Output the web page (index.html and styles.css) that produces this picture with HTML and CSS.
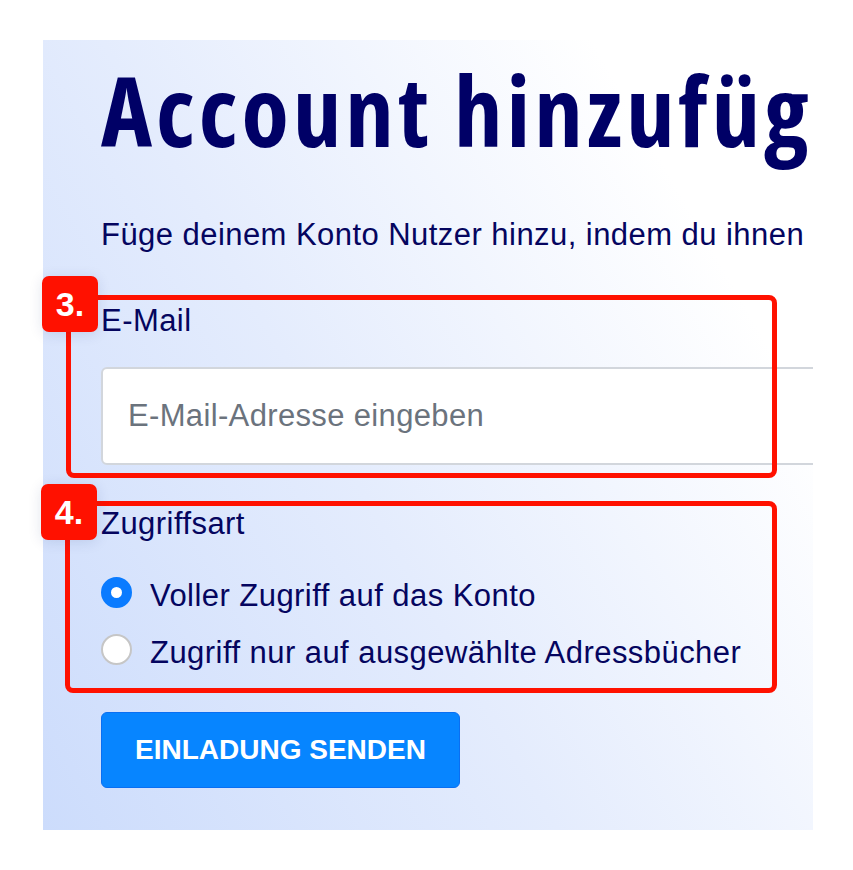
FILE: index.html
```html
<!DOCTYPE html>
<html lang="de">
<head>
<meta charset="utf-8">
<title>Account hinzufügen</title>
<link rel="stylesheet" href="styles.css">
</head>
<body>
<div class="page">
  <main class="panel">
    <h1 class="title">Account hinzufüg</h1>
    <p class="lead">Füge deinem Konto Nutzer hinzu, indem du ihnen</p>
    <div class="field field-email">
      <label class="label" for="email">E-Mail</label>
      <input class="input" id="email" type="email" placeholder="E-Mail-Adresse eingeben">
    </div>
    <div class="field field-access">
      <div class="label label-access">Zugriffsart</div>
      <label class="radio radio-first"><span class="dot dot-on"></span><span>Voller Zugriff auf das Konto</span></label>
      <label class="radio"><span class="dot"></span><span>Zugriff nur auf ausgewählte Adressbücher</span></label>
    </div>
    <button class="btn" type="button">EINLADUNG SENDEN</button>
  </main>
  <div class="mark mark-3"></div>
  <div class="badge badge-3">3.</div>
  <div class="mark mark-4"></div>
  <div class="badge badge-4">4.</div>
</div>
</body>
</html>
```
FILE: styles.css
```css
html, body {
  margin: 0;
  padding: 0;
  background: #ffffff;
}

.page {
  position: relative;
  width: 853px;
  height: 870px;
  padding: 40px 0 0 43px;
  box-sizing: border-box;
}

.panel {
  width: 770px;
  height: 790px;
  box-sizing: border-box;
  padding: 21px 0 0 58px;
  overflow: hidden;
  display: flex;
  flex-direction: column;
  align-items: flex-start;
  background: linear-gradient(60deg, #ccdcfc 0%, #e4ecfd 42%, #ffffff 82%);
  font-family: "Liberation Sans", Arial, sans-serif;
  color: #05055f;
}

.title {
  margin: 0 0 1px 0;
  font-family: "Open Sans", "Lato", sans-serif;
  font-weight: 700;
  font-stretch: 80%;
  font-size: 97px;
  line-height: 96px;
  height: 96px;
  color: #000066;
  white-space: nowrap;
  letter-spacing: 4px;
}

.lead {
  margin: 59px 0 0 0;
  font-size: 31px;
  line-height: 36px;
  letter-spacing: 0.45px;
  white-space: nowrap;
}

.field {
  display: flex;
  flex-direction: column;
  align-items: flex-start;
  width: 100%;
}

.field-email {
  margin-top: 50px;
}

.label {
  font-size: 31px;
  line-height: 36px;
  letter-spacing: 0.45px;
}

.input {
  margin-top: 28px;
  width: 760px;
  height: 98px;
  box-sizing: border-box;
  border: 2px solid #d2d6dc;
  border-radius: 6px;
  background: #ffffff;
  padding: 0 0 0 25px;
  font-family: "Liberation Sans", Arial, sans-serif;
  font-size: 31px;
  letter-spacing: 0.35px;
  color: #333;
  outline: none;
}

.input::placeholder {
  color: #6b737d;
}

.field-access {
  margin-top: 41px;
}

.radio {
  display: flex;
  align-items: center;
  gap: 18px;
  font-size: 31px;
  line-height: 31px;
  height: 31px;
  margin-top: 26px;
  letter-spacing: 0.45px;
  white-space: nowrap;
}

.radio-first {
  margin-top: 38px;
}

.dot {
  width: 31px;
  height: 31px;
  box-sizing: border-box;
  border-radius: 50%;
  background: #ffffff;
  border: 2px solid #c6c6c6;
  margin-bottom: 6px;
  flex: none;
}

.dot-on {
  border: 10px solid #0a7bff;
}

.btn {
  margin-top: 44px;
  width: 359px;
  height: 76px;
  box-sizing: border-box;
  border: 1.5px solid #0a6ff2;
  border-radius: 6px;
  background: #0785ff;
  color: #ffffff;
  font-family: "Liberation Sans", Arial, sans-serif;
  font-weight: 700;
  font-size: 28px;
  padding: 0;
}

.mark {
  position: absolute;
  box-sizing: border-box;
  border: 5px solid #ff1100;
  border-radius: 8px;
}

.mark-3 {
  left: 66px;
  top: 295px;
  width: 711px;
  height: 183px;
}

.mark-4 {
  left: 65px;
  top: 501px;
  width: 712px;
  height: 192px;
}

.badge {
  position: absolute;
  width: 56px;
  height: 56px;
  border-radius: 7px;
  background: #ff1100;
  color: #ffffff;
  font-family: "Liberation Sans", Arial, sans-serif;
  font-weight: 700;
  font-size: 34px;
  display: flex;
  align-items: center;
  justify-content: center;
  box-shadow: 0 2px 14px rgba(20, 40, 110, 0.12);
}

.badge-3 {
  left: 42px;
  top: 276px;
}

.badge-4 {
  left: 41px;
  top: 484px;
}
```
